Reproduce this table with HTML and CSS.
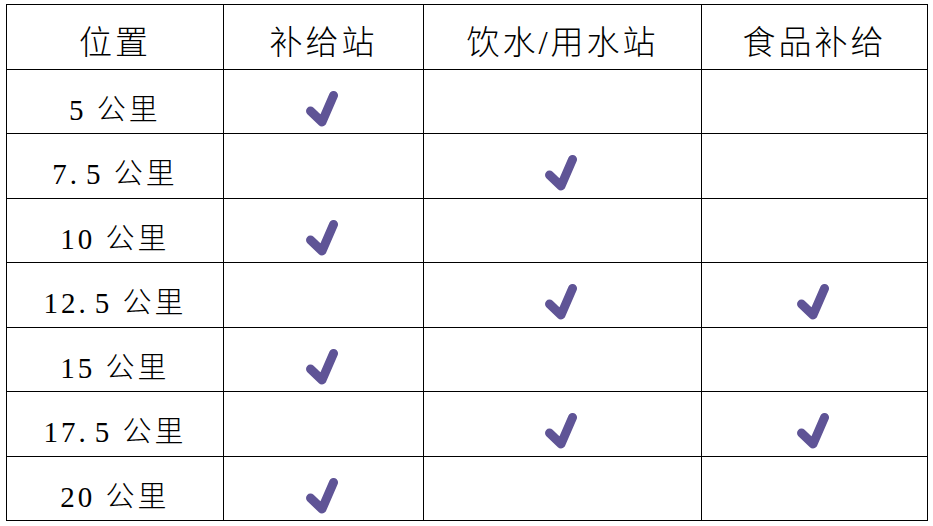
FILE: index.html
```
<!DOCTYPE html>
<html lang="zh">
<head>
<meta charset="utf-8">
<link rel="stylesheet" href="styles.css">
</head>
<body>
<table class="grid">
  <colgroup>
    <col class="c1"><col class="c2"><col class="c3"><col class="c4">
  </colgroup>
  <thead>
    <tr class="head"><th>位置</th><th>补给站</th><th>饮水/用水站</th><th>食品补给</th></tr>
  </thead>
  <tbody>
    <tr><td class="loc">5 公里</td><td><span class="ck"></span></td><td></td><td></td></tr>
    <tr><td class="loc">7<span class="pt">.</span>5 公里</td><td></td><td><span class="ck"></span></td><td></td></tr>
    <tr><td class="loc">10 公里</td><td><span class="ck"></span></td><td></td><td></td></tr>
    <tr><td class="loc">12<span class="pt">.</span>5 公里</td><td></td><td><span class="ck"></span></td><td><span class="ck"></span></td></tr>
    <tr><td class="loc">15 公里</td><td><span class="ck"></span></td><td></td><td></td></tr>
    <tr><td class="loc">17<span class="pt">.</span>5 公里</td><td></td><td><span class="ck"></span></td><td><span class="ck"></span></td></tr>
    <tr><td class="loc">20 公里</td><td><span class="ck"></span></td><td></td><td></td></tr>
  </tbody>
</table>
<svg width="0" height="0" style="position:absolute">
  <defs>
    <symbol id="check" viewBox="0 0 36 36">
      <path d="M4.5 20 L16 31 L27.5 4.5" fill="none" stroke="#5f5496" stroke-width="9" stroke-linecap="round" stroke-linejoin="round"/>
    </symbol>
  </defs>
</svg>
<script>
document.querySelectorAll('.ck').forEach(function(s){
  s.innerHTML = '<svg width="36" height="36"><use href="#check"/></svg>';
});
</script>
</body>
</html>
```
FILE: styles.css
```
html, body {
  margin: 0;
  padding: 0;
  background: #fff;
}
body {
  padding: 4px 0 0 6px;
  font-family: "Liberation Serif", "Noto Sans CJK SC", serif;
  color: #000;
}
.grid {
  border-collapse: collapse;
  table-layout: fixed;
  width: 921px;
}
.c1 { width: 217px; }
.c2 { width: 200px; }
.c3 { width: 278px; }
.c4 { width: 226px; }
.grid th, .grid td {
  border: 1px solid #000;
  padding: 0;
  text-align: center;
  vertical-align: top;
}
.grid .head th {
  height: 65px;
  font-weight: 300;
  font-size: 33px;
  line-height: 33px;
  letter-spacing: 3px;
  padding-top: 22px;
  box-sizing: border-box;
}
.grid tbody td {
  height: 64.43px;
  box-sizing: border-box;
  padding-top: 21px;
  line-height: 0;
}
.grid tbody td.loc {
  font-size: 29px;
  line-height: 29px;
  letter-spacing: 3px;
  font-weight: 300;
  padding-top: 26px;
}
.pt {
  letter-spacing: 9px;
}
.ck {
  display: inline-block;
  width: 36px;
  height: 36px;
  vertical-align: top;
}
.ck svg { display: block; }
```
